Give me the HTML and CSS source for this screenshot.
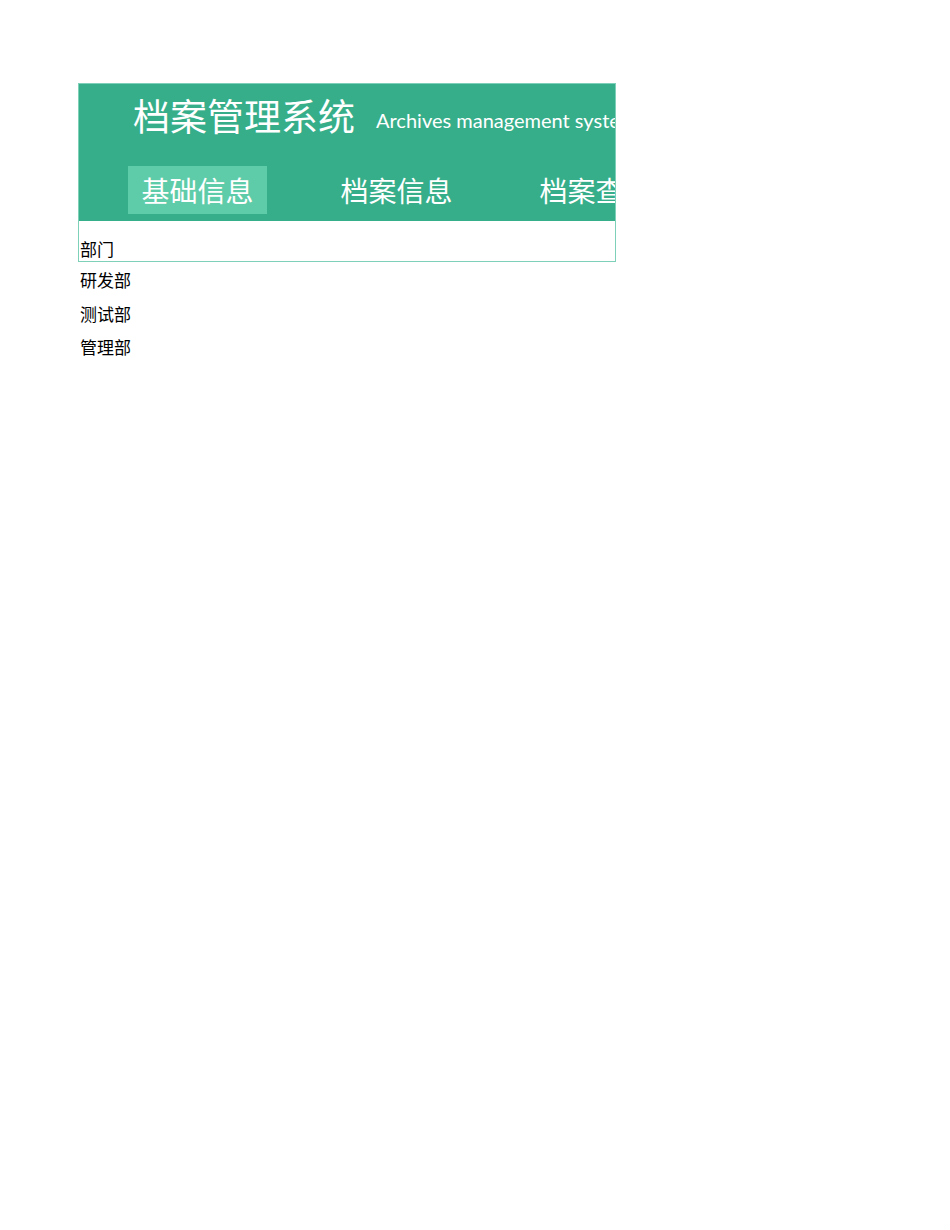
FILE: index.html
```html
<!DOCTYPE html>
<html lang="zh-CN">
<head>
    <meta charset="UTF-8">
    <title>档案管理系统</title>
    <link rel="stylesheet" href="styles.css">
</head>
<body>
    <div class="wrap">
        <div class="header">
            <div class="title">
                <span class="title_cn">档案管理系统</span>
                <span class="title_en">Archives management system</span>
            </div>
            <ul class="nav">
                <li class="nav_item active">基础信息</li>
                <li class="nav_item">档案信息</li>
                <li class="nav_item">档案查询</li>
            </ul>
        </div>
        <div class="dept_head">部门</div>
    </div>
    <ul class="dept_list">
        <li>研发部</li>
        <li>测试部</li>
        <li>管理部</li>
    </ul>
</body>
</html>
```

FILE: styles.css
```css
body{
    margin: 0;
    font-family: "Noto Sans CJK SC", "Open Sans", sans-serif;
    color: #000;
}
.wrap{
    width: 536px;
    margin: 83px 0 0 78px;
    border: 1px solid #7fd0b8;
    overflow: hidden;
}
.header{
    height: 137px;
    background-color: #36ae8a;
    color: #fff;
    white-space: nowrap;
}
.title{
    padding: 4px 0 0 54px;
    height: 58px;
    display: flex;
    align-items: baseline;
}
.title_cn{
    font-size: 37px;
    line-height: 54px;
}
.title_en{
    font-family: "Lato", "Noto Sans CJK SC", sans-serif;
    font-size: 20px;
    margin-left: 21px;
    position: relative;
    top: -3px;
}
.nav{
    list-style: none;
    margin: 0;
    padding: 20px 0 0 49px;
    display: flex;
}
.nav_item{
    width: 139px;
    height: 48px;
    line-height: 48px;
    font-size: 28px;
    text-align: center;
    margin-right: 60px;
    flex-shrink: 0;
}
.nav_item.active{
    background-color: #5fcca9;
}
.dept_head{
    height: 40px;
    font-size: 17px;
    line-height: 20px;
    display: flex;
    align-items: flex-end;
    padding-left: 1px;
    padding-bottom: 2px;
    box-sizing: border-box;
}
.dept_list{
    list-style: none;
    margin: 0;
    padding: 1px 0 0 80px;
    font-size: 17px;
}
.dept_list li{
    height: 33.5px;
    line-height: 33.5px;
}
```
